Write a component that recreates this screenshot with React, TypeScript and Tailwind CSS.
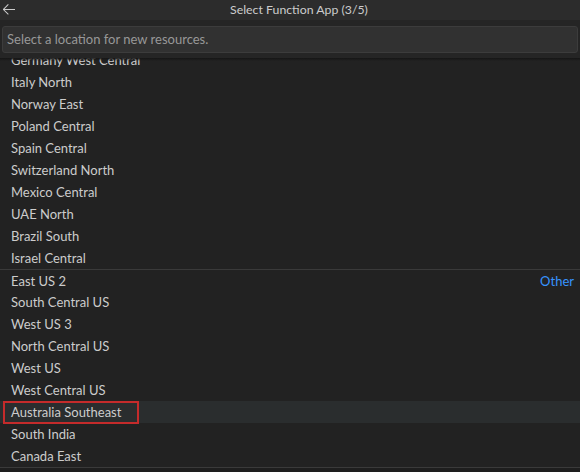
import type { ReactNode } from "react";

type Location = {
  name: string;
  group?: string;
  separator?: boolean;
};

const locations: Location[] = [
  { name: "Germany West Central" },
  { name: "Italy North" },
  { name: "Norway East" },
  { name: "Poland Central" },
  { name: "Spain Central" },
  { name: "Switzerland North" },
  { name: "Mexico Central" },
  { name: "UAE North" },
  { name: "Brazil South" },
  { name: "Israel Central" },
  { name: "East US 2", group: "Other", separator: true },
  { name: "South Central US" },
  { name: "West US 3" },
  { name: "North Central US" },
  { name: "West US" },
  { name: "West Central US" },
  { name: "Australia Southeast" },
  { name: "South India" },
  { name: "Canada East" },
];

const ACTIVE = "Australia Southeast";

const BackArrow = () => (
  <svg width="16" height="16" viewBox="0 0 16 16" fill="#cccccc">
    <path d="M7 3.093l-5 5V8.8l5 5 .707-.707-4.146-4.147H14v-1H3.56L7.708 3.8 7 3.093z" />
  </svg>
);

const Row = ({ item, children }: { item: Location; children?: ReactNode }) => {
  const active = item.name === ACTIVE;
  return (
    <div
      className={`relative flex h-[22px] items-center justify-between pl-[11px] pr-[6px] pt-[1px] ${
        item.separator ? "border-t border-[#3a3a3a] pt-[2px]" : ""
      } ${active ? "bg-[#2a2d2e]" : ""}`}
    >
      <span className="text-[13px] text-[#cccccc]">{item.name}</span>
      {item.group && <span className="text-[13px] text-[#3794ff]">{item.group}</span>}
      {children}
    </div>
  );
};

export default function App() {
  return (
    <div
      className="flex h-[472px] w-[580px] flex-col overflow-hidden bg-[#222222]"
      style={{ fontFamily: '"Segoe UI", Lato, "Noto Sans", sans-serif' }}
    >
      <div className="relative flex h-[20px] shrink-0 items-center justify-center bg-[#2c2c2c] pl-[18px]">
        <div className="absolute left-[1px] top-[1px]">
          <BackArrow />
        </div>
        <span className="text-[12.3px] leading-none text-[#cccccc]">Select Function App (3/5)</span>
      </div>

      <div className="shrink-0 bg-[#252525] px-[2px] pb-[5px] pt-[6px]">
        <div className="flex h-[27px] items-center rounded-[3px] border border-[#3c3c3c] bg-[#313131] px-[4px]">
          <span className="text-[13px] text-[#989898]">Select a location for new resources.</span>
        </div>
      </div>

      <div className="relative flex-1 overflow-hidden">
        <div className="pointer-events-none absolute inset-x-0 top-0 z-10 h-[3px] bg-gradient-to-b from-[#151515] to-transparent" />
        <div className="-mt-[9px]">
          {locations.map((loc) =>
            loc.name === ACTIVE ? (
              <Row key={loc.name} item={loc}>
                <div className="pointer-events-none absolute left-[3px] top-0 h-[23px] w-[136px] border-2 border-[#c42b2b]" />
              </Row>
            ) : (
              <Row key={loc.name} item={loc} />
            )
          )}
        </div>
        <div className="absolute inset-x-0 bottom-0 h-[5px] border-t border-[#3a3a3a] bg-[#1e1e1e]" />
      </div>
    </div>
  );
}
